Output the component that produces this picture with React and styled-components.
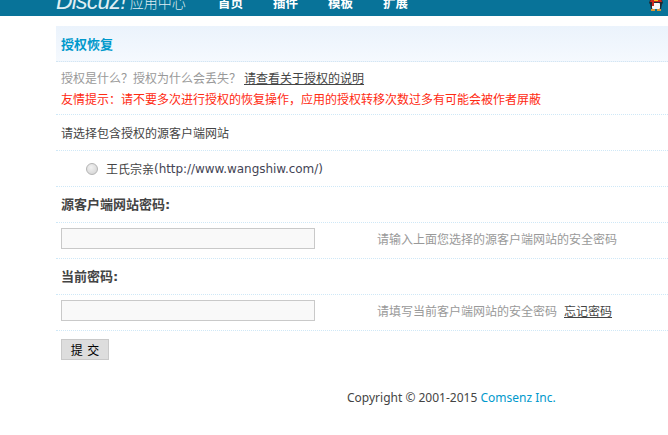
import React from "react";
import styled, { createGlobalStyle } from "styled-components";

const GlobalStyle = createGlobalStyle`
  html, body {
    margin: 0;
    padding: 0;
    background: #fff;
    overflow: hidden;
  }
  body {
    font-family: "DejaVu Sans", "Noto Sans CJK SC", sans-serif;
    font-size: 12px;
    color: #444;
  }
`;

const Page = styled.div`
  width: 668px;
  height: 435px;
  overflow: hidden;
`;

const Header = styled.header`
  height: 16px;
  box-sizing: border-box;
  background: #087399;
  display: flex;
  align-items: flex-end;
  padding: 0 4px 5px 56px;
  overflow: hidden;
`;

const Logo = styled.div`
  width: 162px;
  display: flex;
  align-items: flex-end;
  color: #dfeef3;
  flex-shrink: 0;
`;

const LogoMark = styled.span`
  font-family: "Liberation Sans", sans-serif;
  font-style: italic;
  font-size: 23px;
  line-height: 19px;
  letter-spacing: -0.8px;
  margin-right: 4px;
`;

const LogoText = styled.span`
  font-family: "Noto Sans CJK SC", sans-serif;
  font-weight: 300;
  font-size: 14px;
  line-height: 17px;
`;

const Nav = styled.nav`
  display: flex;
  gap: 28px;
  flex: 1;
`;

const NavItem = styled.a`
  font-family: "Noto Sans CJK SC", sans-serif;
  font-size: 12.5px;
  font-weight: 700;
  line-height: 17px;
  width: 27px;
  color: #fff;
  white-space: nowrap;
`;

const Main = styled.main`
  margin: 10px 0 0 56px;
  width: 700px;
`;

const Title = styled.h3`
  margin: 0;
  height: 36px;
  box-sizing: border-box;
  padding: 0 5px;
  display: flex;
  align-items: center;
  background: linear-gradient(#ebf3fc, #f5f9fe);
  border-bottom: 1px dotted #d3e6f3;
  color: #0099cc;
  font-family: "Noto Sans CJK SC", sans-serif;
  font-size: 13px;
  font-weight: 700;
`;

const Tips = styled.div`
  height: 53px;
  box-sizing: border-box;
  padding: 7px 5px 0;
  border-bottom: 1px dotted #cfe8f7;
`;

const TipLine = styled.p`
  margin: 0;
  height: 21px;
  line-height: 21px;
  white-space: nowrap;
  color: ${({ $red }) => ($red ? "#ff2a12" : "#999")};
`;

const Row = styled.div`
  height: 36px;
  box-sizing: border-box;
  padding: 0 5px;
  display: flex;
  align-items: center;
  border-bottom: 1px dotted #cfe8f7;
  white-space: nowrap;
`;

const IndentRow = styled(Row)`
  padding-left: 30px;
`;

const LabelRow = styled(Row)`
  padding-bottom: 2px;
  font-size: 13px;
  font-weight: 700;
`;

const FieldRow = styled(Row)`
  padding-bottom: 4px;
`;

const Radio = styled.span`
  width: 12px;
  height: 12px;
  border-radius: 50%;
  box-sizing: border-box;
  border: 1px solid #b4b4b4;
  background: radial-gradient(circle at 40% 35%, #f2f2f2, #d0d0d0);
  margin-right: 8px;
`;

const Url = styled.span`
  color: #445;
  letter-spacing: -0.05px;
`;

const Field = styled.input`
  width: 254px;
  height: 21px;
  box-sizing: border-box;
  padding: 0 4px;
  margin: 0;
  background: #f9f9f9;
  border: 1px solid #c9c9c9;
  flex-shrink: 0;
  outline: none;
`;

const Hint = styled.span`
  margin-left: 62px;
  color: #999;
`;

const HelpLink = styled.a`
  margin-left: 3px;
  color: #444;
  text-decoration: underline;
`;

const TextLink = styled.a`
  margin-left: 7px;
  color: #444;
  text-decoration: underline;
`;

const ButtonRow = styled.div`
  padding: 8px 5px 0;
`;

const Submit = styled.button`
  display: block;
  width: 48px;
  height: 21px;
  padding: 0;
  margin: 0;
  background: #dddddd;
  border: 1px solid #c9c9c9;
  color: #000;
  font-family: "Noto Sans CJK SC", sans-serif;
  font-size: 12px;
  line-height: 18px;
  word-spacing: 2px;
`;

const Footer = styled.footer`
  margin-top: 30px;
  padding-left: 291px;
  font-family: "Noto Sans", sans-serif;
  font-size: 12px;
  line-height: 16px;
  color: #444;
  white-space: nowrap;
`;

const Brand = styled.a`
  color: #0099cc;
`;

const Penguin = () => (
  <svg width="16" height="12" viewBox="0 0 16 12" aria-hidden="true">
    <path d="M2 1h12l1 3-1 1-1 5H3L2 5 1 4z" fill="#1c2a33" />
    <path d="M3 0h10l1 3H2z" fill="#c9261c" />
    <rect x="6" y="0" width="4" height="2" fill="#f7c21a" />
    <rect x="4" y="4" width="8" height="6" rx="1" fill="#f6f6f6" />
    <rect x="4" y="3" width="2" height="4" fill="#c9261c" />
    <rect x="3" y="10" width="4" height="2" fill="#d9952f" />
    <rect x="9" y="10" width="4" height="2" fill="#d9952f" />
  </svg>
);

const App = () => (
  <Page>
    <GlobalStyle />
    <Header>
      <Logo>
        <LogoMark>Discuz!</LogoMark>
        <LogoText>应用中心</LogoText>
      </Logo>
      <Nav>
        <NavItem>首页</NavItem>
        <NavItem>插件</NavItem>
        <NavItem>模板</NavItem>
        <NavItem>扩展</NavItem>
      </Nav>
      <Penguin />
    </Header>
    <Main>
      <Title>授权恢复</Title>
      <Tips>
        <TipLine>
          授权是什么？授权为什么会丢失？<HelpLink>请查看关于授权的说明</HelpLink>
        </TipLine>
        <TipLine $red>友情提示：请不要多次进行授权的恢复操作，应用的授权转移次数过多有可能会被作者屏蔽</TipLine>
      </Tips>
      <Row>请选择包含授权的源客户端网站</Row>
      <IndentRow>
        <Radio />
        王氏宗亲<Url>(http://www.wangshiw.com/)</Url>
      </IndentRow>
      <LabelRow>源客户端网站密码:</LabelRow>
      <FieldRow>
        <Field type="password" />
        <Hint>请输入上面您选择的源客户端网站的安全密码</Hint>
      </FieldRow>
      <LabelRow>当前密码:</LabelRow>
      <FieldRow>
        <Field type="password" />
        <Hint>请填写当前客户端网站的安全密码</Hint>
        <TextLink>忘记密码</TextLink>
      </FieldRow>
      <ButtonRow>
        <Submit>提 交</Submit>
      </ButtonRow>
      <Footer>
        Copyright © 2001-2015 <Brand>Comsenz Inc.</Brand>
      </Footer>
    </Main>
  </Page>
);

export default App;
